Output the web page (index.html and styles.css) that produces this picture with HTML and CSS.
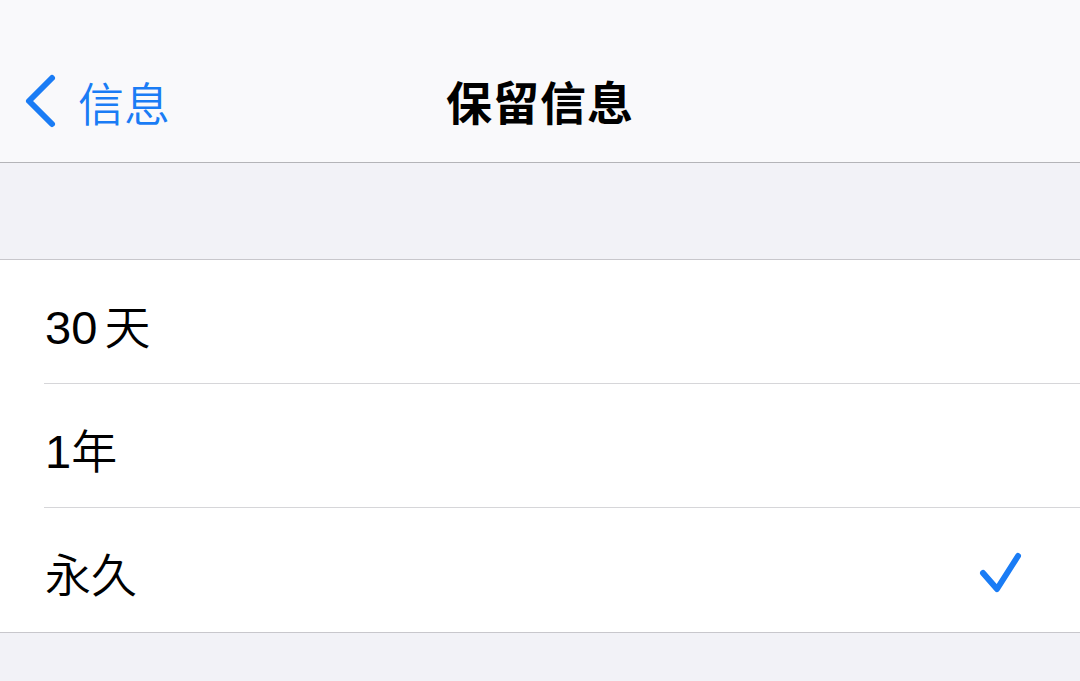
FILE: index.html
```html
<!DOCTYPE html>
<html lang="zh">
<head>
<meta charset="utf-8">
<link rel="stylesheet" href="styles.css">
</head>
<body>
<div class="nav">
  <div class="back">
    <svg class="chev" width="40" height="60" viewBox="0 0 40 60"><path d="M30 7 L7 30 L30 53" fill="none" stroke="#1a7cf5" stroke-width="6" stroke-linecap="round" stroke-linejoin="round"/></svg>
    <span class="back-text">信息</span>
  </div>
  <div class="title">保留信息</div>
</div>
<div class="gap"></div>
<div class="group">
  <div class="row"><span class="label"><span class="num">30</span> 天</span></div>
  <div class="row"><span class="label"><span class="num">1</span>年</span></div>
  <div class="row last"><span class="label">永久</span>
    <svg class="check" width="48" height="46" viewBox="0 0 48 46"><path d="M5 24 L19 40 L40 7" fill="none" stroke="#1a7cf5" stroke-width="6" stroke-linecap="round" stroke-linejoin="round"/></svg>
  </div>
</div>
<div class="bottom"></div>
</body>
</html>
```
FILE: styles.css
```css
html, body {
  margin: 0;
  padding: 0;
  width: 1080px;
  height: 681px;
  overflow: hidden;
  background: #f2f2f7;
  font-family: "Noto Sans CJK SC", "Noto Sans", sans-serif;
}
.nav {
  position: relative;
  height: 162px;
  background: #f9f9fb;
  border-bottom: 1px solid #b4b4b8;
  display: flex;
  align-items: center;
  justify-content: center;
}
.back {
  position: absolute;
  left: 22px;
  top: 71px;
  display: flex;
  align-items: center;
  height: 60px;
}
.chev { display: block; }
.back-text {
  color: #1a7cf5;
  font-size: 46px;
  font-weight: 350;
  margin-left: 16px;
  line-height: 60px;
}
.title {
  font-size: 46px;
  font-weight: 700;
  color: #000;
  margin-top: 38px;
  letter-spacing: 1px;
}
.gap {
  height: 96px;
  border-bottom: 1px solid #c8c7cc;
}
.group {
  background: #fff;
  border-bottom: 1px solid #c8c7cc;
}
.row {
  height: 123px;
  margin-left: 44px;
  border-bottom: 1px solid #d6d6d9;
  display: flex;
  align-items: center;
  justify-content: space-between;
  padding-right: 56px;
}
.row.last { border-bottom: none; height: 124px; }
.label {
  font-size: 46px;
  font-weight: 350;
  color: #000;
  margin-left: 1px;
  margin-top: 4px;
  word-spacing: -3px;
}
.num {
  font-family: "Liberation Sans", "Noto Sans", sans-serif;
  font-weight: 400;
  font-size: 47px;
}
.check { display: block; margin-top: 3px; margin-right: -2px; }
.bottom { height: 60px; }
```
